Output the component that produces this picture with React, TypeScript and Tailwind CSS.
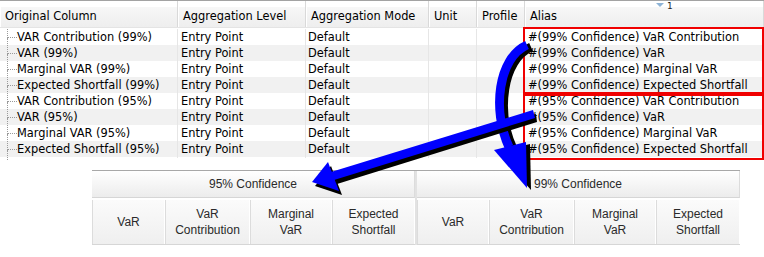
import React from "react";

const rows = [
  ["VAR Contribution (99%)", "#(99% Confidence) VaR Contribution"],
  ["VAR (99%)", "#(99% Confidence) VaR"],
  ["Marginal VAR (99%)", "#(99% Confidence) Marginal VaR"],
  ["Expected Shortfall (99%)", "#(99% Confidence) Expected Shortfall"],
  ["VAR Contribution (95%)", "#(95% Confidence) VaR Contribution"],
  ["VAR (95%)", "#(95% Confidence) VaR"],
  ["Marginal VAR (95%)", "#(95% Confidence) Marginal VaR"],
  ["Expected Shortfall (95%)", "#(95% Confidence) Expected Shortfall"],
];

const headers = ["Original Column", "Aggregation Level", "Aggregation Mode", "Unit", "Profile", "Alias"];
const grid = "grid grid-cols-[178px_128px_123px_48px_48px_1fr]";

function Group({ title, widths, last }: { title: string; widths: number[]; last?: boolean }) {
  const labels = [["VaR"], ["VaR", "Contribution"], ["Marginal", "VaR"], ["Expected", "Shortfall"]];
  return (
    <div className={`flex flex-col ${last ? "border-l-2 border-[#e2e2e2]" : ""}`}>
      <div className="h-[27px] flex items-center justify-center bg-gradient-to-b from-white to-[#ececec] border-b border-[#d6d6d6] border-r border-r-[#dcdcdc]">
        {title}
      </div>
      <div className="h-[2px] bg-white" />
      <div className="flex h-[45px] border-b border-[#d6d6d6]">
        {labels.map((l, i) => (
          <div
            key={i}
            style={{ width: widths[i] }}
            className="flex flex-col items-center justify-center leading-[16px] bg-gradient-to-b from-[#fbfbfb] to-[#efefef] border-l border-[#dcdcdc] border-r border-r-white"
          >
            {l.map((t) => (
              <span key={t}>{t}</span>
            ))}
          </div>
        ))}
      </div>
    </div>
  );
}

export default function App() {
  return (
    <div className="relative w-[764px] h-[257px] bg-white overflow-hidden text-black" style={{ fontFamily: "'DejaVu Sans', Verdana, sans-serif" }}>
      {/* Top table */}
      <div className="text-[11.4px]">
        <div className="border-t border-[#a3a3a3]">
          <div className={`${grid} h-[27px] border-b border-[#e4e4e4]`}>
            {headers.map((h, i) => (
              <div key={h} className="flex flex-col border-r border-[#d9d9d9]">
                <div className="h-[6px] bg-white flex justify-end relative">
                  {i === 5 && (
                    <div className="absolute left-[131px] top-[1px] flex items-start gap-[3px] text-[9px] leading-[8px] text-[#222]">
                      <span className="block mt-[1px] w-0 h-0 border-l-[4px] border-r-[4px] border-t-[4px] border-l-transparent border-r-transparent border-t-[#8db3d6]" />
                      <span>1</span>
                    </div>
                  )}
                </div>
                <div className="flex-1 flex items-center pl-[4px] bg-gradient-to-b from-[#f7f7f7] to-[#eeeeee] border-l border-white">
                  {h}
                </div>
              </div>
            ))}
          </div>
          <div className="h-px bg-white" />
        </div>
        {rows.map((r, idx) => (
          <div key={idx} className={`${grid} h-[16px] leading-[17px] ${idx % 2 === 1 ? "bg-[#f1f1f1]" : "bg-white"}`}>
            <div className="flex border-r border-[#e6e6e6] whitespace-nowrap">
              <div className="w-[7px] shrink-0" />
              <div className="w-[10px] shrink-0 flex flex-col">
                <div className="flex-1 border-l border-b border-dotted border-[#9a9a9a]" />
                <div className="flex-1 border-l border-dotted border-[#9a9a9a]" />
              </div>
              <span>{r[0]}</span>
            </div>
            <div className="pl-[3px] border-r border-[#e6e6e6]">Entry Point</div>
            <div className="pl-[2px] border-r border-[#e6e6e6]">Default</div>
            <div className="border-r border-[#e6e6e6]" />
            <div className="border-r border-[#e6e6e6]" />
            <div className="pl-[3px] whitespace-nowrap">{r[1]}</div>
          </div>
        ))}
        <div className="h-[3px] ml-[7px] border-l border-dotted border-[#9a9a9a]" />
      </div>

      {/* Bottom grouped header */}
      <div
        className="ml-[92px] mt-[10px] w-[648px] flex border-t border-[#a8a8a8] text-[12px] text-[#2a2a2a]"
        style={{ fontFamily: "'Liberation Sans', Arial, sans-serif" }}
      >
        <div className="w-[323px]">
          <Group title="95% Confidence" widths={[73, 85, 82, 83]} />
        </div>
        <div className="w-[325px]">
          <Group title="99% Confidence" widths={[72, 85, 82, 84]} last />
        </div>
      </div>

      {/* Red annotation boxes */}
      <div className="absolute left-[523px] top-[27px] w-[241px] h-[67px] border-2 border-[#f00000]" />
      <div className="absolute left-[523px] top-[94px] w-[241px] h-[66px] border-2 border-[#f00000]" />

      {/* Arrows */}
      <svg className="absolute left-0 top-0" width="764" height="257" viewBox="0 0 764 257">
        <g transform="translate(4,2)">
          <path d="M 527 45 C 498 58, 492 110, 509 147" fill="none" stroke="#000" strokeWidth="9" />
          <polygon points="494,150 526,142 527,188" fill="#000" />
        </g>
        <path d="M 527 45 C 498 58, 492 110, 509 147" fill="none" stroke="#0000ff" strokeWidth="9" />
        <polygon points="494,150 526,142 527,188" fill="#0000ff" />
        <g transform="translate(3,4)">
          <polygon points="533,110 534,118 334,180 331,172" fill="#000" />
          <polygon points="328,162 339,191 312,182" fill="#000" />
        </g>
        <polygon points="533,110 535,118 334,180 331,172" fill="#0000ff" />
        <polygon points="328,162 339,191 312,182" fill="#0000ff" />
      </svg>
    </div>
  );
}
